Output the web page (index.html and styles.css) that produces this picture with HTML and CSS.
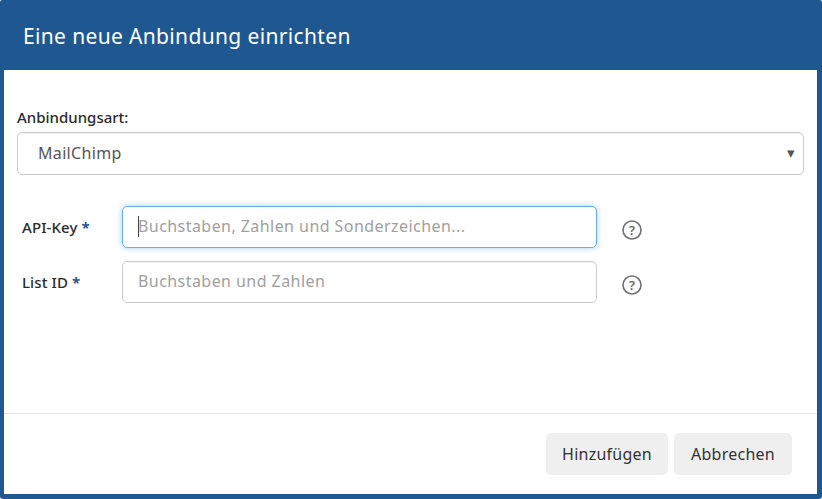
FILE: index.html
```html
<!DOCTYPE html>
<html lang="de">
<head>
<meta charset="utf-8">
<title>Eine neue Anbindung einrichten</title>
<link rel="stylesheet" href="styles.css">
</head>
<body>
<div class="dialog">
  <header class="dialog-header"><h1>Eine neue Anbindung einrichten</h1></header>
  <main class="dialog-body">
    <label class="type-label" for="type">Anbindungsart:</label>
    <div class="select-wrap">
      <select id="type" class="type-select"><option>MailChimp</option></select>
      <span class="select-arrow">▾</span>
    </div>
    <div class="fields">
      <div class="field">
        <label class="field-label" for="key">API-Key <span class="req">*</span></label>
        <div class="input-wrap">
          <input id="key" class="field-input is-focus" type="text" placeholder="Buchstaben, Zahlen und Sonderzeichen...">
          <span class="caret"></span>
        </div>
        <svg class="help" viewBox="0 0 20 20" width="20" height="20" aria-hidden="true"><circle cx="10" cy="10" r="9" fill="none" stroke="#707070" stroke-width="1.6"/><text x="10" y="14.5" text-anchor="middle" class="help-mark">?</text></svg>
      </div>
      <div class="field">
        <label class="field-label" for="list">List ID <span class="req">*</span></label>
        <div class="input-wrap">
          <input id="list" class="field-input" type="text" placeholder="Buchstaben und Zahlen">
        </div>
        <svg class="help" viewBox="0 0 20 20" width="20" height="20" aria-hidden="true"><circle cx="10" cy="10" r="9" fill="none" stroke="#707070" stroke-width="1.6"/><text x="10" y="14.5" text-anchor="middle" class="help-mark">?</text></svg>
      </div>
    </div>
  </main>
  <footer class="dialog-footer">
    <button class="btn btn-add" type="button">Hinzufügen</button>
    <button class="btn btn-cancel" type="button">Abbrechen</button>
  </footer>
</div>
</body>
</html>
```
FILE: styles.css
```css
* { box-sizing: border-box; }
html, body { margin: 0; height: 100%; background: #d8d8d8; }
body { font-family: "Noto Sans", "Open Sans", sans-serif; color: #333; }
.dialog {
  width: 822px; height: 499px;
  display: flex; flex-direction: column;
  background: #fff;
  border: solid #1f5890;
  border-width: 0 5px 5px 4px;
  border-radius: 4px;
}
.dialog-header {
  height: 70px; flex: none;
  background: #1f5890;
  margin: 0 -5px 0 -4px;
  padding: 0 0 0 23px;
  display: flex; align-items: center;
  border-radius: 3px 3px 0 0;
}
.dialog-header h1 {
  margin: 0; color: #fff;
  font-size: 21px; font-weight: 400;
  letter-spacing: 0.35px;
  position: relative; top: 1px;
}
.dialog-body { flex: 1; padding: 37px 13px 0 13px; }
.type-label {
  display: block; height: 25px; line-height: 20px;
  font-size: 15px; font-weight: 500; color: #2b2b2b;
}
.select-wrap { position: relative; }
.type-select {
  display: block; width: 100%; height: 43px;
  appearance: none; -webkit-appearance: none;
  background: #fff; border: 1px solid #ccc; border-radius: 5px;
  padding: 0 20px 2px;
  font: 16px "Noto Sans", sans-serif; color: #555;
  letter-spacing: 0.33px;
  box-shadow: inset 0 1px 1px rgba(0,0,0,.06);
}
.select-arrow {
  position: absolute; right: 9px; top: 10px;
  font-size: 15px; line-height: 20px; color: #555;
}
.fields { display: flex; flex-direction: column; gap: 13px; margin-top: 31px; padding-left: 5px; }
.field { display: flex; align-items: center; height: 42px; }
.field-label {
  width: 100px; flex: none;
  font-size: 15px; font-weight: 500; color: #2b2b2b;
  letter-spacing: 0.1px;
}
.req { color: #1f5890; font-weight: 700; }
.input-wrap { position: relative; width: 475px; height: 42px; flex: none; }
.field-input {
  display: block; width: 100%; height: 42px;
  border: 1px solid #ccc; border-radius: 5px;
  padding: 0 15px 2px; outline: none;
  font: 16px "Noto Sans", sans-serif; color: #555;
  letter-spacing: 0.44px;
  box-shadow: inset 0 1px 1px rgba(0,0,0,.04);
}
.field-input::placeholder { color: #a0a0a0; opacity: 1; }
.is-focus { border-color: #66afe9; box-shadow: inset 0 1px 1px rgba(0,0,0,.05), 0 0 6px rgba(102,175,233,.6); }
.caret { position: absolute; left: 16px; top: 10px; width: 1px; height: 21px; background: #444; }
.help { margin-left: 25px; flex: none; position: relative; top: 3px; }
.help-mark { font: 600 13px "Noto Sans", sans-serif; fill: #666; }
.dialog-footer {
  flex: none; height: 81px;
  border-top: 1px solid #e5e5e5;
  display: flex; justify-content: flex-end; align-items: flex-start;
  gap: 6px; padding: 19px 25px 0 0;
}
.btn {
  height: 42px; border: 0; border-radius: 5px;
  background: #efefef; color: #333;
  font: 16px "Noto Sans", sans-serif;
  padding: 0;
  letter-spacing: 0.25px;
}
.btn-add { width: 122px; }
.btn-cancel { width: 118px; }
```
